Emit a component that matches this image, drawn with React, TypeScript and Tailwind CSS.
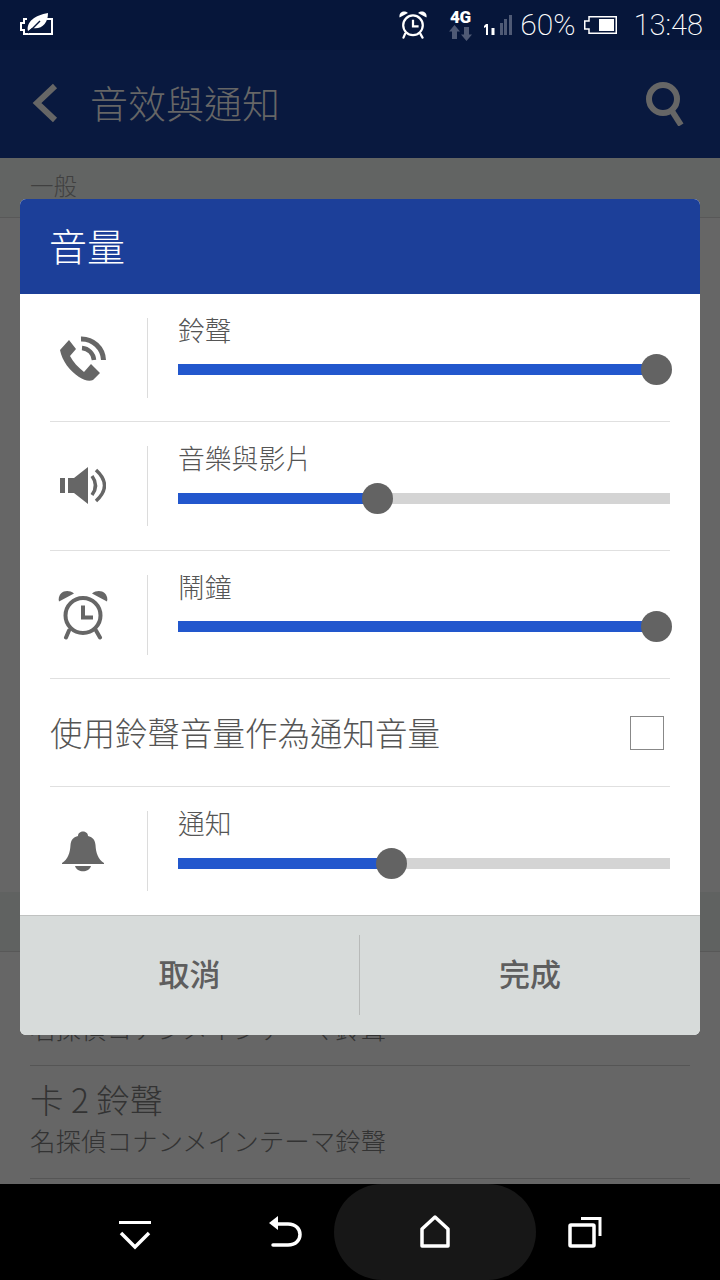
const cjk = "font-['Noto_Sans_CJK_TC','Noto_Sans_CJK_JP',sans-serif] font-[200]";

function Slider({ label, percent, trackGap }: { label: string; percent: number; trackGap: string }) {
  return (
    <div className="flex-1 pl-[30px] relative h-[80px]">
      <div className={`${cjk} text-[26.8px] leading-[30px] text-[#555] mt-[-3px]`}>{label}</div>
      <div className={`relative h-[11px] bg-[#d4d4d4] ${trackGap}`}>
        <div className="h-full bg-[#2257cd]" style={{ width: `${percent}%` }} />
        <div
          className="absolute top-[-10px] w-[31px] h-[31px] rounded-full bg-[#636363] ml-[-15px]"
          style={{ left: `${percent}%` }}
        />
      </div>
    </div>
  );
}

function PhoneIcon() {
  return (
    <svg width="46" height="45" viewBox="0 0 46 45" fill="#666">
      <path d="M9 4 L16 13 L10 20 C13 26 18 31 24 36 L31 28 L40 37 L33 44 C29 46 24 44 19 41 C10 35 2 25 0 14 Z" />
      <path d="M22 12 A13 13 0 0 1 34 24" fill="none" stroke="#666" strokeWidth="4.5" />
      <path d="M21 3 A22 22 0 0 1 43.5 24" fill="none" stroke="#666" strokeWidth="5" />
    </svg>
  );
}

function SpeakerIcon() {
  return (
    <svg width="46" height="38" viewBox="0 0 46 38" fill="#666">
      <rect x="0" y="11" width="5" height="15" />
      <path d="M8 11 H14 L28 0 V37 L14 26 H8 Z" />
      <path d="M32 9 Q39 18.5 32 28" fill="none" stroke="#666" strokeWidth="3.5" />
      <path d="M36 3 Q53 18.5 36 34" fill="none" stroke="#666" strokeWidth="3.5" />
    </svg>
  );
}

function AlarmIcon({ color = "#666", size = 50 }: { color?: string; size?: number }) {
  return (
    <svg width={size} height={size} viewBox="0 0 50 49" fill={color}>
      <circle cx="25" cy="25" r="17.5" fill="none" stroke={color} strokeWidth="4" />
      <path d="M25 15 V27 H35" fill="none" stroke={color} strokeWidth="4" />
      <path d="M1 11 C-1 3 8 -3 16 3 Z" />
      <path d="M49 11 C51 3 42 -3 34 3 Z" />
      <path d="M11 40 L8 47 M38 40 L42 47" fill="none" stroke={color} strokeWidth="4" strokeLinecap="round" />
    </svg>
  );
}

function BellIcon() {
  return (
    <svg width="42" height="41" viewBox="0 0 42 41" fill="#666">
      <path d="M0 32 C6 28 8 22 8.5 14 C9 8 12 6 16 5 C16 -1 26 -1 26 5 C30 6 33 8 33.5 14 C34 22 36 28 42 32 V33 H0 Z" />
      <path d="M13 35 H29 C27 42 15 42 13 35 Z" />
    </svg>
  );
}

function Row({ icon, label, percent, trackGap }: { icon: React.ReactNode; label: string; percent: number; trackGap: string }) {
  return (
    <div className="flex items-center">
      <div className="w-[98px] flex justify-center pr-[32px] h-[80px] items-center border-r border-[#dcdcdc] shrink-0">
        {icon}
      </div>
      <Slider label={label} percent={percent} trackGap={trackGap} />
    </div>
  );
}

export default function App() {
  return (
    <div className={`w-[720px] h-[1280px] relative overflow-hidden bg-[#666] ${cjk}`}>
      {/* header */}
      <div className="h-[158px] bg-[#09193f] relative">
        <div className="h-[50px] bg-[#06163a] flex items-center pl-[19px] pr-[17px] justify-between">
          <svg width="34" height="26" viewBox="0 0 34 26" fill="none">
            <path d="M8 7 H5 V11 H2 V18 H5 V22 H33 V7 H28" stroke="#fff" strokeWidth="2" />
            <path d="M9 19 C7 10 16 3 29 1 C29 11 23 18 13 16 Z" fill="#fff" />
            <path d="M9 21 L21 9" stroke="#06163a" strokeWidth="1.5" />
          </svg>
          <div className="flex items-center">
            <AlarmIcon color="#fff" size={28} />
            <div className="w-[22px] ml-[22px] flex flex-col items-center">
              <span className="font-['Roboto',sans-serif] font-black text-[17px] leading-[14px] text-white tracking-[-0.5px]">4G</span>
              <svg className="mt-[1px]" width="23" height="16" viewBox="0 0 23 16" fill="#4f5a75">
                <path d="M5.5 0 L11 6.5 H8 V14 H3 V6.5 H0 Z" />
                <path d="M17.5 16 L23 9.5 H20 V2 H15 V9.5 H12 Z" />
              </svg>
            </div>
            <svg className="ml-[13px]" width="28" height="24" viewBox="0 0 28 24">
              <path d="M0 13 L2 11 H4 V22 H2 V14 L0 15 Z" fill="#fff" />
              <rect x="7.5" y="15" width="3" height="7" fill="#fff" />
              <rect x="16" y="10" width="3" height="12" fill="#4f5a75" />
              <rect x="20" y="6" width="3" height="16" fill="#4f5a75" />
              <rect x="25" y="2" width="3" height="20" fill="#4f5a75" />
            </svg>
            <span className="font-['Roboto',sans-serif] font-[200] text-[30px] text-white ml-[8px] leading-none">60%</span>
            <svg className="ml-[8px]" width="33" height="18" viewBox="0 0 33 18" fill="none">
              <path d="M5 .75 H32.25 V17.25 H5 V13 H.75 V5 H5 Z" stroke="#fff" strokeWidth="1.5" />
              <rect x="15" y="3" width="15" height="12" fill="#fff" />
            </svg>
            <span className="font-['Roboto',sans-serif] font-[200] text-[29px] text-white ml-[17px] leading-none">13:48</span>
          </div>
        </div>
        <div className="h-[108px] flex items-center pb-[5px] relative">
          <svg className="ml-[31px] mt-[3px]" width="30" height="40" viewBox="0 0 30 40" fill="none">
            <path d="M24 3 L6 20 L24 37" stroke="#666" strokeWidth="6" />
          </svg>
          <span className="text-[38px] text-[#666] ml-[29px] leading-none">音效與通知</span>
          <svg className="absolute right-[34px] top-[32px]" width="40" height="44" viewBox="0 0 40 44" fill="none">
            <circle cx="17" cy="17" r="14" stroke="#666" strokeWidth="6" />
            <path d="M26 29 L35 43" stroke="#666" strokeWidth="6" />
          </svg>
        </div>
      </div>

      {/* dimmed page behind the dialog */}
      <div className="h-[60px] bg-[#626463] border-b border-[#585858] px-[30px]">
        <div className="text-[23.5px] text-[#404040] pt-[12px] leading-[30px]">一般</div>
      </div>
      <div className="absolute left-0 right-0 top-[892px] h-[60px] bg-[#606261] border-b border-[#585858]" />
      <div className="absolute left-[30px] right-[30px] top-[1016px]">
        <div className="text-[25.5px] text-[#333] leading-[24px]">名探偵コナンメインテーマ鈴聲</div>
        <div className="h-[1px] bg-[#555] mt-[25px]" />
        <div className="text-[33.5px] text-[#333] mt-[12px] leading-[42px]">卡 2 鈴聲</div>
        <div className="text-[25.5px] text-[#333] leading-[36px] mt-[2px]">名探偵コナンメインテーマ鈴聲</div>
        <div className="h-[1px] bg-[#555] mt-[20px]" />
      </div>

      {/* dialog */}
      <div className="absolute left-[20px] top-[199px] w-[680px] h-[836px] rounded-[6px] overflow-hidden bg-white flex flex-col">
        <div className="h-[95px] bg-[#1c3f99] flex items-center pl-[29px] pb-[4px] shrink-0">
          <span className="text-[38px] text-white leading-none">音量</span>
        </div>
        <div className="flex-1 px-[30px]">
          <div className="h-[128px] pt-[24px] border-b border-[#e0e0e0]">
            <Row icon={<PhoneIcon />} label="鈴聲" percent={97.15} trackGap="mt-[19px]" />
          </div>
          <div className="h-[129px] pt-[24px] border-b border-[#e0e0e0]">
            <Row icon={<SpeakerIcon />} label="音樂與影片" percent={40.4} trackGap="mt-[20px]" />
          </div>
          <div className="h-[128px] pt-[24px] border-b border-[#e0e0e0]">
            <Row icon={<AlarmIcon />} label="鬧鐘" percent={97.15} trackGap="mt-[19px]" />
          </div>
          <div className="h-[108px] flex items-center justify-between border-b border-[#e0e0e0] pr-[6px]">
            <span className="text-[32.5px] text-[#555] leading-none">使用鈴聲音量作為通知音量</span>
            <div className="w-[34px] h-[34px] border border-[#888] bg-white" />
          </div>
          <div className="pt-[24px]">
            <Row icon={<BellIcon />} label="通知" percent={43.2} trackGap="mt-[20px]" />
          </div>
        </div>
        <div className="h-[120px] bg-[#d7dbda] border-t border-[#c0c2c1] flex items-center pb-[1px] shrink-0">
          <div className="w-[339px] text-center text-[31px] font-[500] text-[#5e5e5e] leading-none pb-[6px]">取消</div>
          <div className="w-[1px] h-[80px] bg-[#b8bab9]" />
          <div className="flex-1 text-center text-[31px] font-[500] text-[#5e5e5e] leading-none pb-[6px]">完成</div>
        </div>
      </div>

      {/* nav bar */}
      <div className="absolute left-0 right-0 bottom-0 h-[96px] bg-black">
        <div className="absolute left-[334px] top-0 w-[202px] h-[96px] rounded-[48px] bg-[#171717]" />
        <svg className="absolute left-[118px] top-[36px]" width="34" height="30" viewBox="0 0 34 30" fill="none">
          <path d="M1 2.5 H33" stroke="#fff" strokeWidth="3" />
          <path d="M3 13 L17 27 L31 13" stroke="#fff" strokeWidth="3.5" />
        </svg>
        <svg className="absolute left-[268px] top-[30px]" width="36" height="36" viewBox="0 0 36 36" fill="none">
          <path d="M1 9 L10 2 V16 Z" fill="#fff" />
          <path d="M9 10 H20 C36 10 36 31 20 31 H5" stroke="#fff" strokeWidth="3.5" strokeLinecap="round" />
        </svg>
        <svg className="absolute left-[419px] top-[30px]" width="32" height="36" viewBox="0 0 32 36" fill="none">
          <path d="M3 15 L16 3 L29 15 V32 H3 Z" stroke="#fff" strokeWidth="3.5" strokeLinejoin="round" />
        </svg>
        <svg className="absolute left-[567px] top-[30px]" width="36" height="36" viewBox="0 0 36 36" fill="none">
          <rect x="3" y="11" width="24" height="21" rx="1" stroke="#fff" strokeWidth="3.5" />
          <path d="M14 4.5 H33 V22" stroke="#fff" strokeWidth="3" />
        </svg>
      </div>
    </div>
  );
}
